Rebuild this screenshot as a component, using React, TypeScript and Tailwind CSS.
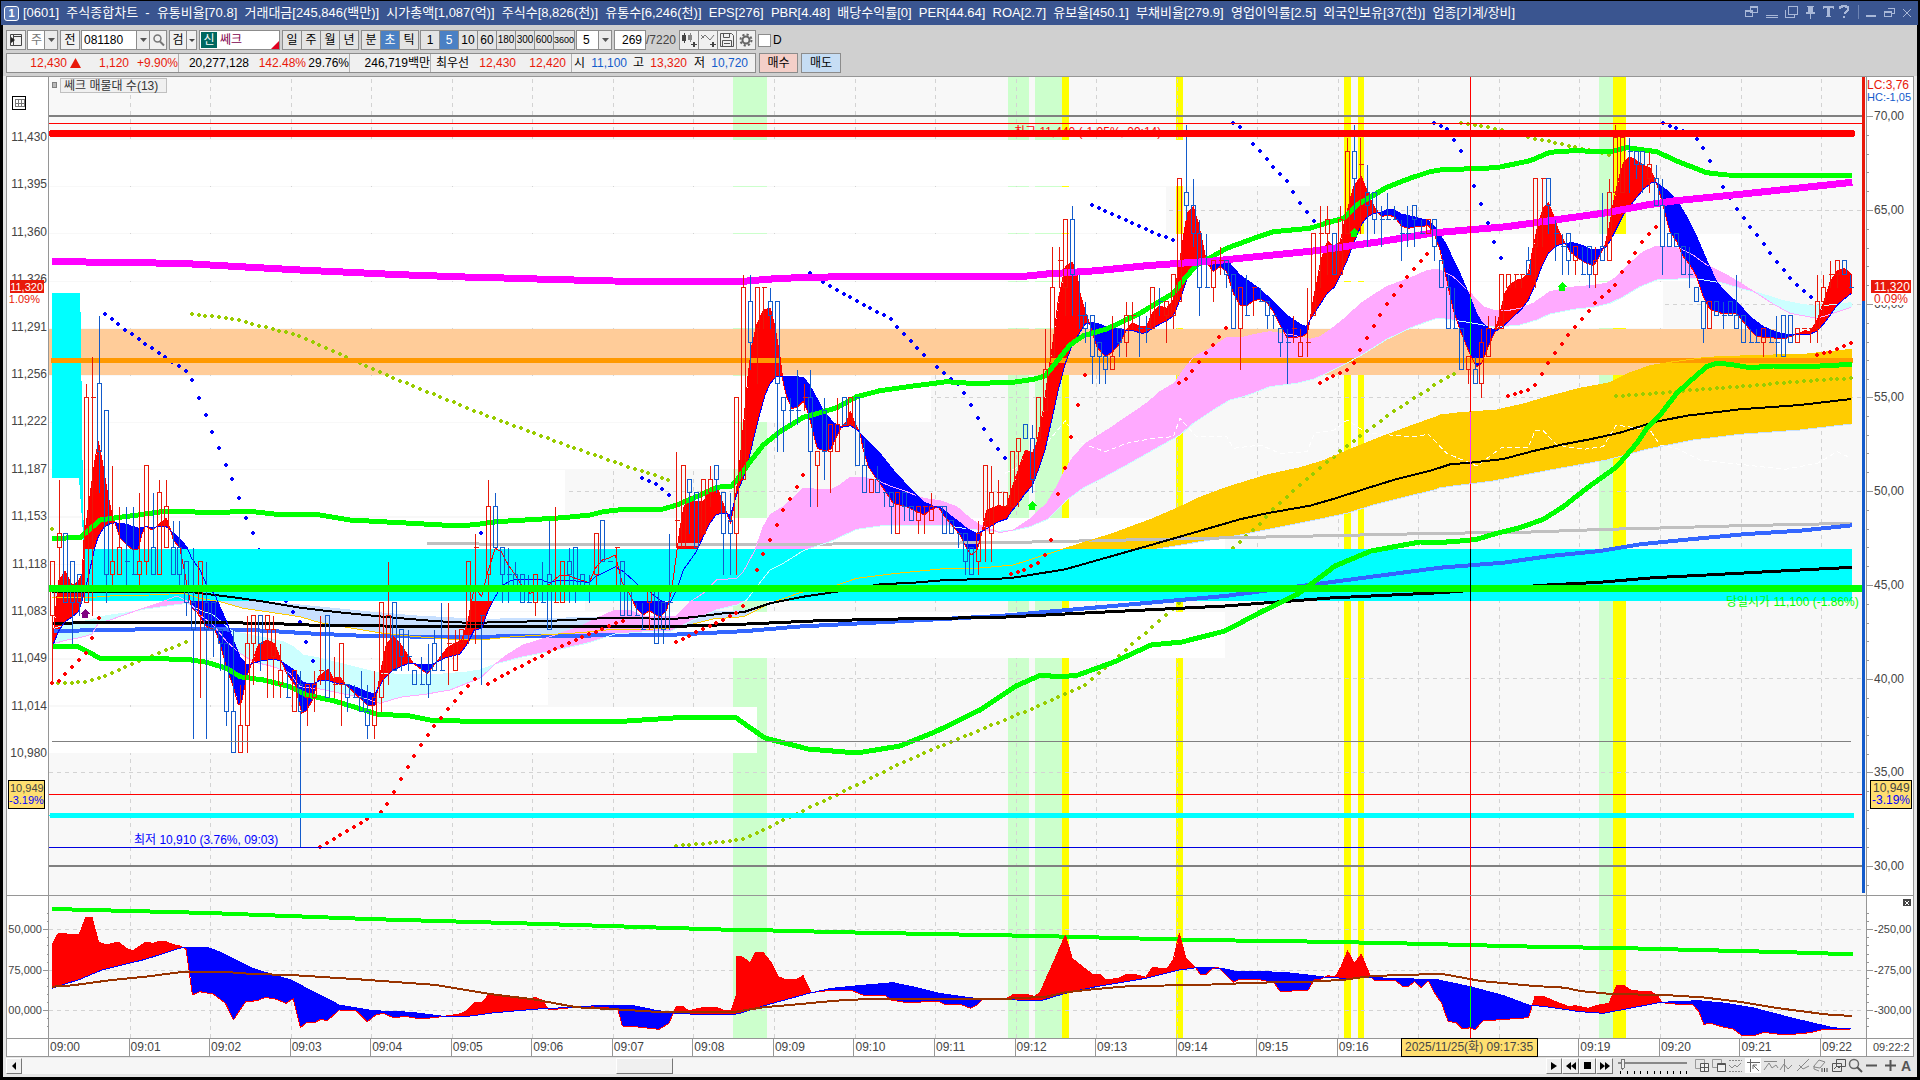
import type { ReactNode } from "react";

type Pt = [number, number];

const GRID_X = Array.from({ length: 23 }, (_, i) => Math.round(49 + 80.55 * i) + 0.5);

// Traces are stored as "x,y" pairs relative to a tile origin, three units per pixel.
const tile = (ox: number, oy: number, data: string, sx = 3): Pt[] =>
  data.split(" ").map((p) => {
    const [x, y] = p.split(",").map(Number);
    return [ox + x / sx, oy + y / 3];
  });

const A = (d: string) => tile(0, 130, d);
const B = (d: string) => tile(0, 540, d);
const C = (d: string) => tile(480, 240, d);
const D = (d: string) => tile(980, 100, d);
const E = (d: string) => tile(1440, 100, d);
const F = (d: string) => tile(1440, 500, d);
const V = (d: string) => tile(0, 880, d, 2.063);
const W = (d: string) => tile(740, 880, d, 2.613);
const X = (d: string) => tile(1320, 880, d, 2.613);
const abs = (d: string) => d.split(" ").map((p) => p.split(",").map(Number) as Pt);

const toPoints = (pts: Pt[]) => pts.map(([x, y]) => `${x.toFixed(1)},${y.toFixed(1)}`).join(" ");

function valueAt(pts: Pt[], x: number) {
  if (x <= pts[0][0]) return pts[0][1];
  for (let i = 1; i < pts.length; i++) {
    if (x <= pts[i][0]) {
      const [x0, y0] = pts[i - 1];
      const [x1, y1] = pts[i];
      return x1 === x0 ? y1 : y0 + ((y1 - y0) * (x - x0)) / (x1 - x0);
    }
  }
  return pts[pts.length - 1][1];
}

// One vertical sliver per pixel, split by which line is on top.
function slivers(a: Pt[], b: Pt[]) {
  let above = "";
  let below = "";
  const end = Math.min(a[a.length - 1][0], b[b.length - 1][0]);
  for (let x = Math.ceil(a[0][0]); x < end; x++) {
    const ya = Math.round(valueAt(a, x));
    const yb = Math.round(valueAt(b, x));
    if (ya < yb) above += `M${x} ${ya}h1V${yb}h-1z`;
    else if (yb < ya) below += `M${x} ${yb}h1V${ya}h-1z`;
  }
  return { above, below };
}

function dotsAlong(pts: Pt[]): Pt[] {
  const out: Pt[] = [];
  const n = Math.round((pts[pts.length - 1][0] - pts[0][0]) / 6.71);
  for (let i = 0; i <= n; i++) {
    const x = pts[0][0] + i * 6.71;
    out.push([Math.round(x), Math.round(valueAt(pts, x))]);
  }
  return out;
}

const fast: Pt[] = [
  ...A("157,1550"),
  ...B("175,125 195,93 215,135 235,125 247,100"),
  ...A("252,1230 260,1170 275,1060 285,990 295,935 305,985 320,1075 335,1150 345,1180 360,1225 375,1240 395,1257 415,1257 425,1215 436,1188 457,1200 478,1182 499,1165 510,1195 520,1230"),
  ...B("540,25 560,130 575,205 590,215 620,260 645,270 660,310 680,385 700,440 715,495 725,485 740,410 760,355 775,315 800,300 825,312 840,355 860,400 885,435 905,520 920,512 940,475 955,410 985,388 1000,415 1020,412 1040,438 1060,455 1080,475 1100,495 1125,495 1140,405 1160,310 1180,290 1200,310 1240,370 1282,402 1310,365 1345,320 1385,300 1405,240 1423,140"),
  ...C("5,1070 25,990 46,925 64,935 85,975 106,1005 124,1035 150,1060 200,1040 240,1005 265,1007 286,1015 328,1028 346,985 367,960 385,955 406,945 427,1030 448,1060 469,1105 490,1125 508,1112 540,1132 560,1110 575,1050 592,925 600,865 612,800 630,770 645,785 670,785 690,750 709,735 725,780 740,820 752,850 765,780 775,710 790,560 805,400 815,320 830,255 850,210 871,205 885,260 900,350 910,430 920,470 935,505 950,503 970,483 985,520 1000,580 1012,625 1035,633 1052,628 1070,590 1085,560 1100,545 1111,515 1125,550 1140,580 1150,630 1165,680 1185,710 1210,745 1240,790 1280,800 1310,815 1333,825 1350,810 1375,800 1390,825 1420,860 1440,885 1460,925 1474,945 1492,930 1505,880"),
  ...D("20,1230 55,1217 80,1220 94,1170 115,1110 136,1050 157,1060 170,1030 190,930 205,820 220,720 235,600 256,500 277,487 290,520 300,580 316,635 335,690 350,740 376,770 397,757 420,730 440,690 457,668 478,678 499,680 517,640 538,617 560,625 580,600 590,540 600,480 612,400 622,340 640,320 655,370 670,440 679,485 700,515 720,500 740,515 760,580 780,615 800,618 820,603 841,597 860,607 880,635 900,675 920,712 945,712 965,710 982,700 990,660 1000,600 1010,550 1021,490 1035,440 1045,425 1063,440 1081,425 1095,360 1110,300 1123,255 1144,230 1162,275 1183,320 1204,350 1222,345 1243,350 1264,378 1285,385 1310,380 1345,377 1362,400 1380,450"),
  ...E("20,540 40,630 60,690 92,768 110,800 124,792 145,740 165,695 180,640 195,580 210,555 230,540 250,535 265,520 280,440 295,370 310,325 325,308 340,345 355,390 375,430 390,455 410,472 430,485 460,498 478,470 495,435 508,380 520,310 535,240 550,190 568,170 590,182 610,195 630,205 649,247 665,300 680,360 690,395 710,425 730,470 750,495 770,530 790,590 810,628 850,642 889,640 910,665 930,690 950,710 990,713 1035,717 1050,710 1075,700 1095,692 1111,695 1132,660 1153,600 1171,545 1192,512 1213,505 1234,523"),
];

const slow: Pt[] = [
  ...B("157,320 175,275 195,245 215,232 235,215 247,180 265,110 285,20"),
  ...A("295,1220 310,1195 325,1183 345,1178 380,1183 400,1190 418,1195 436,1190 457,1192 478,1190 499,1190 515,1205 535,1222 560,1250"),
  ...B("575,55 600,90 620,135 645,165 660,200 680,245 700,300 720,350 740,375 760,370 785,362 820,358 840,362 860,375 885,392 905,425 920,430 945,430 960,420 985,422 1010,430 1040,433 1070,443 1100,455 1125,462 1150,420 1180,390 1220,372 1240,370 1262,375 1300,372 1340,352 1380,342 1400,315 1423,270"),
  ...C("5,1165 25,1110 46,1070 64,1040 85,1025 106,1018 150,1018 180,1018 205,1028 240,1020 265,1020 328,1028 346,1010 367,1000 406,980 427,992 448,1010 469,1030 490,1048 508,1055 547,1085 570,1088 590,1050 610,990 649,935 670,890 690,850 709,823 740,820 752,825 765,780 775,750 790,715 805,665 820,600 840,520 855,465 871,430 890,408 910,408 970,412 985,430 1000,455 1030,510 1060,548 1085,562 1111,557 1135,572 1150,590 1200,640 1240,690 1290,745 1330,785 1360,798 1385,805 1410,825 1440,848 1460,865 1490,880 1510,872"),
  ...D("34,1278 55,1265 80,1257 94,1235 115,1210 136,1180 157,1157 175,1110 195,1050 215,960 235,870 256,790 277,735 298,700 316,672 337,668 358,672 376,680 400,683 440,692 460,692 485,700 500,698 520,683 560,662 580,648 600,600 620,540 640,500 660,490 679,487 700,485 730,475 745,485 780,525 841,568 880,605 920,645 960,672 978,680 1000,645 1021,612 1042,580 1063,562 1081,527 1102,480 1123,425 1144,375 1162,350 1183,340 1200,338 1225,327 1243,330 1264,342 1300,350 1345,362 1370,385"),
  ...E("0,405 20,435 40,480 60,520 92,595 110,640 124,665 145,683 170,692 190,678 210,660 247,625 265,600 285,555 305,500 325,460 350,437 375,430 400,428 430,437 455,450 480,448 500,440 520,405 550,345 580,305 610,268 635,248 649,247 680,270 710,300 740,350 770,410 800,480 830,545 860,580 900,615 930,650 970,680 1010,697 1050,705 1110,703 1132,692 1153,670 1171,645 1192,615 1213,597 1234,580"),
];

const pinkSpan: Pt[] = [
  ...B("157,312 200,300 240,293 275,283 295,250 330,240 380,222 430,205 480,188 530,168 570,187 600,225 640,255 680,305 720,340 760,365 820,380 870,400 900,440 960,447 1020,460 1080,470 1140,490 1200,472 1280,462 1350,450 1400,430"),
  ...C("0,1315 46,1272 80,1245 130,1215 200,1193 300,1160 350,1135 406,1110 450,1112 500,1130 590,1128 630,1085 670,1060 709,1020 770,1015 790,995 825,930 850,860 870,825 910,800 970,745 1050,750 1080,735 1111,712 1150,712 1190,720 1230,738 1280,755 1330,775 1380,782 1430,800 1470,835 1500,855 1560,878"),
  ...D("100,1290 150,1257 200,1210 230,1160 255,1110 280,1070 320,1028 390,985 440,950 500,910 540,875 585,848 610,810 640,772 700,740 740,712 780,714 830,702 870,695 940,705 990,718 1020,710 1050,690 1100,650 1140,612 1180,585 1220,560 1260,545 1300,530 1340,512 1370,507"),
  ...E("0,510 40,530 92,580 130,620 165,632 200,632 240,625 280,610 330,575 390,562 450,557 500,550 530,530 570,490 610,455 650,438 720,445 760,465 800,495 860,525 900,548 950,580 1000,612 1050,640 1132,655 1180,640 1234,622"),
];

const cyanSpan: Pt[] = [
  ...B("157,265 270,240 300,230 380,218 430,208 560,190 600,210 640,225 700,275 780,290 850,305 880,320 910,345 960,355 1000,365 1040,375 1100,390 1140,400 1200,403 1270,405 1330,402 1400,396"),
  ...C("0,1290 46,1272 130,1250 220,1232 320,1210 406,1182 500,1175 570,1175 590,1165 640,1140 709,1110 770,1095 800,1080 830,1040 870,990 910,970 970,932 1050,905 1130,868 1200,858 1280,857 1400,857 1470,868 1530,874"),
  ...D("100,1292 150,1280 205,1257 260,1200 316,1160 376,1130 440,1095 520,1050 600,1005 640,970 700,930 750,900 800,887 870,860 950,850 1000,838 1050,815 1100,790 1150,762 1220,718 1300,680 1370,655"),
  ...E("0,655 92,668 165,682 240,675 290,660 330,642 400,628 460,622 510,610 550,590 600,560 650,540 760,535 850,550 910,568 960,580 1030,602 1090,614 1140,618 1234,608"),
];

const goldSpan: Pt[] = [
  ...B("157,172 250,174 330,168 450,165 550,160 600,175 660,185 730,205 800,215 900,230 960,248 1040,262 1150,280 1250,290 1340,297 1420,298"),
  ...C("0,1200 100,1190 300,1178 400,1168 520,1167 600,1162 700,1137 790,1130 870,1090 960,1058 1070,1035 1130,1015 1250,1000 1400,985"),
  ...D("0,1404 100,1395 256,1345 400,1300 515,1257 590,1225 660,1192 740,1162 860,1125 960,1103 1030,1082 1100,1052 1200,1012 1300,975 1370,950"),
  ...E("0,945 60,938 170,930 250,912 330,888 420,865 510,848 560,822 630,797 700,785 800,772 900,768 1100,762 1234,748"),
];

const skySpan: Pt[] = [
  ...B("157,160 500,160 700,183 780,185 850,190 950,200 1100,215 1250,228 1420,237"),
  ...C("0,1138 200,1135 400,1132 580,1135 700,1115 790,1112 900,1080 980,1070 1100,1060 1200,1037 1350,1033"),
  ...D("0,1450 256,1420 513,1350 780,1305 1020,1257 1100,1240 1180,1215 1260,1195 1370,1168"),
  ...E("0,1163 160,1143 330,1110 500,1080 620,1048 760,1020 900,1003 1080,990 1234,972"),
];

const magenta: Pt[] = [
  ...A("157,394 300,397 540,400 720,410 900,420 1200,434 1420,442"),
  ...C("0,112 200,118 400,123 600,125 790,124 900,115 1080,110 1480,110"),
  ...D("0,530 120,530 200,522 350,512 500,497 600,490 700,483 1000,453 1200,425 1370,397"),
  ...E("0,397 200,380 500,338 620,315 700,303 900,283 1237,247"),
];

const bandUpper: Pt[] = [
  ...A("157,1225 240,1223 270,1198 300,1170 350,1163 430,1153 500,1143 570,1145 640,1149 740,1143 830,1153 960,1155 1050,1170 1200,1178 1380,1188"),
  ...C("0,852 50,845 250,833 330,825 370,815 440,807 550,807 590,795 650,770 710,742 755,738 775,715 810,665 850,615 900,575 970,532 1020,518 1070,503 1130,470 1200,452 1300,438 1400,425 1470,430"),
  ...D("0,850 100,847 160,838 195,828 230,785 270,735 310,707 380,687 480,640 580,580 610,540 650,495 700,468 740,445 830,412 880,395 990,385 1030,372 1090,355 1130,315 1170,292 1220,262 1290,235 1350,215"),
  ...E("0,210 170,203 270,182 330,157 400,152 510,155 560,143 650,155 710,183 800,218 860,225 1000,226 1237,228"),
];

const bandLower: Pt[] = [
  ...B("157,320 235,320 260,333 300,355 450,356 560,358 620,367 680,385 720,410 790,420 870,440 920,465 1000,482 1060,500 1130,522 1230,528 1290,540 1440,545"),
  ...abs("612,722 673,718 735,717 749,727 765,738 808,749 857,753 900,746 937,731 980,710 1016,686 1041,675 1060,677 1078,675 1114,662 1151,645 1182,642 1225,631 1261,612 1298,594 1335,566 1371,551 1420,542"),
  ...F("0,127 40,125 110,118 170,100 240,83"),
  ...E("310,1258 370,1220 440,1165 530,1100 590,1030 620,985 660,945 710,880 760,835 800,800 830,790 870,793 930,803 1000,798 1100,800 1237,793"),
];

const blackThin: Pt[] = [
  ...B("157,155 300,157 580,157 700,172 780,183 900,203 1000,215 1150,230 1300,243 1430,250"),
  ...C("0,1148 200,1143 400,1133 580,1137 650,1130 730,1120 790,1117 870,1090 970,1070 1070,1055 1200,1033 1300,1028 1400,1020 1560,1016"),
  ...D("108,1432 256,1408 513,1335 780,1258 860,1240 990,1217 1060,1197 1160,1165 1250,1137 1340,1115"),
  ...E("0,1103 30,1093 92,1088 190,1077 280,1053 370,1033 450,1018 540,998 640,967 740,947 900,928 1080,915 1234,897"),
];

const blackThick: Pt[] = [
  ...B("157,250 370,247 650,248 800,250 950,256 1150,258 1430,261"),
  ...C("0,1160 400,1160 560,1160 650,1157 800,1152 1000,1143 1200,1138 1560,1132"),
  ...abs("1225,606 1330,598"),
  ...F("0,278 320,255 480,247 640,233 800,225 1040,212 1237,202"),
];

const royal: Pt[] = [
  ...B("157,273 440,268 600,266 800,272 920,280 1100,288 1430,292"),
  ...C("0,1190 250,1187 560,1185 700,1178 800,1173 950,1160 1200,1147 1560,1128"),
  ...abs("1225,596 1347,580"),
  ...F("0,203 190,188 330,168 480,153 600,133 760,117 920,102 1080,92 1237,76"),
];

const silver: Pt[] = [
  ...A("1282,1240 1430,1240"),
  ...C("0,913 500,914 800,915 1060,912 1560,908"),
  ...F("0,100 250,97 500,88 660,84 900,77 1237,70"),
];

const whiteDash: Pt[] = [
  ...D("75,1120 136,1090 157,1110 200,1030 256,962 300,1028 376,1055 440,1030 517,1015 580,1010 600,955 650,1010 740,1010 760,1045 841,1035 900,1060 982,1055 1003,1000 1063,990 1102,960 1162,1000 1300,1010 1345,1003"),
  ...E("20,1060 92,1090 110,1098 186,1042 265,1042 286,990 310,992 350,1035 430,1048 490,1040 528,975 630,990 660,1035 710,1045 780,1080 1035,1108 1132,1090 1192,1055 1234,1075"),
];

const sarBlue = [
  [...A("315,552 377,600 436,642 500,685 558,723 576,747 597,806 640,912 679,1008 700,1053 738,1164 760,1215"), ...B("780,35 799,75 819,117 841,155 860,187 880,218 900,248 921,312 940,366")],
  C("487,713 508,723 528,732 547,748 567,765"),
  C("4,878 5,878"),
  [...C("990,98 1030,127 1090,161 1170,204 1233,237 1252,262 1312,324 1332,345 1373,381 1435,435 1453,459 1494,534"), ...D("16,990 34,1020 75,1077")],
  D("336,315 397,343 478,378 538,405 580,420"),
  D("759,69 780,81 820,132 880,200 922,246 961,309 1003,366"),
  [...D("1362,69 1384,78 1405,90 1426,126"), ...E("64,156 104,261 124,315 145,373 165,432 186,480")],
  E("669,69 709,84 730,92 769,117 790,144 811,186 850,261 870,295 888,324 910,354 951,405 990,459 1030,510 1071,555 1111,591"),
].flatMap(dotsAlong);

const sarRed = [
  B("156,429 175,423 195,402 216,381 235,360 256,340 276,297 295,234"),
  B("961,921 1000,897 1041,873 1102,836 1141,816 1161,795 1203,717 1242,648 1282,585 1303,558 1345,506 1363,483 1384,459 1423,417"),
  C("25,1332 45,1320 106,1288 166,1257 205,1237 247,1218 300,1195 346,1175 388,1158 427,1142"),
  C("588,1206 610,1197 650,1176 709,1149 751,1128 770,1120 790,1098 828,993 849,945 871,897 909,813 930,777 970,705"),
  [...abs("1011,574 1026,569 1038,563 1050,548"), ...D("235,1176 256,1095 276,1002 297,903 316,819")],
  D("597,849 618,837 640,810 679,756 720,708 739,684"),
  D("1020,849 1041,837 1081,819 1102,810 1122,788 1143,747 1182,675 1222,612 1264,555 1303,504 1345,459"),
  E("204,888 265,870 285,855 306,819 345,759 388,702 427,654 466,609 508,570 528,552 546,516 588,456 607,426 649,378"),
  E("1131,765 1171,755 1192,747 1213,738 1234,729"),
].flatMap(dotsAlong);

const sarOlive = [
  A("156,1197 157,1197"),
  [...A("576,552 700,567 780,588 900,618 1000,665 1060,690 1160,735 1280,785 1430,845"), ...C("0,519 200,594 385,660 567,720")],
  B("175,429 256,426 316,408 397,372 457,348 559,306"),
  [...abs("676,846 741,840 784,820 857,785 912,758 980,730 1041,705 1084,686 1127,649 1176,606 1200,582 1225,555 1261,523"), ...D("880,1227 961,1155 1041,1085 1102,1038 1161,993 1243,933 1345,867"), ...E("0,843 46,819")],
  E("64,69 124,78 186,90 265,112 345,128 406,141 508,165"),
  E("528,888 650,880 780,868 930,857 1050,847 1234,834"),
].flatMap(dotsAlong);

// dir(u/d) bodyTop-bodyBottom high-low, in 10-won ticks below 11,440
const CANDLES =
  "u32-36 32-41,u30-31 26-34,d30-35 30-35,d32-35 32-38,d33-35 33-36,u20-35 19-35,u20-20 17-36,d19-24 14-27,d21-33 21-35,u32-33 25-34,u31-33 28-33,d32-32 28-34,d33-33 28-33,u32-33 27-34,u25-32 25-33,d31-33 27-33,u27-33 26-33,u28-31 26-31,d31-33 29-33,d31-33 29-34," +
  "d32-35 32-36,d35-37 31-45,u32-36 32-42,d35-37 32-45,d35-37 35-39,d37-38 37-40,d38-43 38-44,d43-46 37-46,u44-46 41-46,u38-44 36-46,u36-38 36-41,d36-38 36-40,u36-37 36-42,u37-39 36-42,u40-41 38-42,d42-42 40-42,u40-43 40-43,d41-43 40-53,u41-42 41-44,u41-42 40-43," +
  "u40-40 36-41,d36-42 36-42,u41-41 39-42,u38-41 38-44,d41-42 41-43,d42-42 41-42,d42-43 40-43,d43-44 41-45,u42-44 40-45,u35-42 35-43,u36-40 32-41,d35-40 35-40,d37-39 37-40,d39-39 37-40,d40-41 40-41,d41-41 39-41,d40-41 38-42,d38-40 37-40,d40-40 35-40,u38-38 35-41," +
  "u38-40 37-40,u37-38 37-38,u32-37 32-38,u31-31 30-38,d36-36 36-41,u28-33 26-35,d28-31 27-31,d31-33 31-35,d33-33 31-35,d33-34 32-34,d33-35 33-35,d35-35 33-35,u33-35 33-36,d35-35 32-35,d33-37 29-37,u35-35 28-35,u32-35 32-35,d32-33 31-35,d31-34 31-35,d33-34 33-34," +
  "d34-34 33-35,u30-33 30-34,d29-32 29-32,d32-32 32-32,u31-31 31-34,d32-36 32-36,d34-36 34-36,d36-36 35-36,d37-37 35-37,u34-35 34-37,d34-38 34-38,d35-37 35-38,d35-35 30-37,u29-29 24-31,u25-31 25-31,d26-27 26-30,d27-31 27-31,u26-30 26-30,u26-27 25-28,d25-26 25-27," +
  "d27-30 27-33,d29-30 27-33,u20-30 20-33,u12-26 11-26,d13-16 11-18,u12-15 12-19,u12-12 12-15,d13-14 12-15,d13-19 13-24,d20-21 20-24,d21-21 20-22,d21-21 18-22,u20-20 19-21,d20-24 18-28,u24-25 24-28,d21-24 20-26,u22-24 22-27,u22-24 20-24,d20-22 20-22,u20-22 20-22," +
  "d20-25 20-25,d25-27 23-27,u26-27 26-27,d26-27 25-27,d27-27 27-28,d27-28 27-30,u27-30 27-30,d27-28 27-29,d28-29 28-29,u28-29 28-30,u28-28 28-30,u28-29 27-29,d28-28 28-28,d28-30 28-30,d29-30 29-30,d30-30 30-31,d30-32 30-33,d31-33 31-33,u30-32 29-33,u25-29 25-32," +
  "u27-30 25-32,u27-27 26-28,u27-28 27-28,u24-28 24-28,u23-24 23-28,d22-23 22-23,d23-26 22-27,u20-23 20-23,u18-21 15-21,u12-17 9-17,u10-10 9-12,u7-12 7-14,d7-11 6-14,d14-14 11-15,d14-15 13-16,d14-17 14-19,d16-17 16-19,d17-18 17-19,u17-18 14-18,d15-16 15-17," +
  "u14-16 13-17,u14-14 13-15,d15-15 14-17,d15-15 14-16,u12-15 12-15,d13-13 12-14,u13-14 13-16,u11-14 11-15,u4-13 4-13,d5-6 0-7,d6-8 4-9,d8-12 7-14,d12-12 8-12,u10-12 10-13,u10-10 9-11,d10-11 10-12,d11-15 11-15,u12-15 12-18,d14-14 11-14,u12-12 12-14," +
  "d13-13 12-13,d13-14 13-15,d14-14 14-15,d15-16 15-17,d16-16 15-19,u15-15 14-16,u16-17 15-17,u16-16 12-17,u8-14 8-14,u8-8 6-12,u7-8 6-11,d8-11 8-11,u7-11 6-11,u2-8 1-8,d2-4 0-7,u3-3 1-8,d5-6 3-9,d5-7 5-8,d7-7 6-9,d7-7 5-7," +
  "d7-7 6-7,d8-8 7-10,d8-8 6-9,d6-7 6-9,d8-8 7-8,u7-8 7-8,d7-9 7-10,d10-12 10-12,d12-15 11-15,d15-15 12-15,d15-18 15-18,u17-18 17-19,d18-19 17-19,u16-19 15-20,u15-17 14-17,u15-15 14-15,u11-15 11-15,u11-12 11-12,u11-11 11-12,u11-11 11-12," +
  "d10-11 9-11,u4-9 4-12,u4-4 4-9,d4-6 4-8,d8-8 7-10,d9-9 8-11,d8-10 8-11,u9-10 9-11,d11-11 9-11,d9-11 9-12,u10-11 9-12,d9-10 5-10,u5-10 4-10,u1-5 0-5,u1-5 1-5,d2-2 1-5,d2-3 2-4,d2-3 2-5,u3-4 2-5,d4-6 3-6," +
  "d6-9 4-11,d8-9 8-9,d8-9 8-9,d9-11 9-11,d11-11 9-12,d12-13 12-13,d13-15 13-16,u13-15 13-15,d13-14 13-14,d14-14 13-15,d13-14 13-14,d14-15 11-15,d14-16 14-16,d16-16 15-16,d16-16 15-16,u15-16 15-17,d16-16 15-16,d16-16 14-17,d14-17 14-17,d14-16 14-16," +
  "u15-16 15-16,u15-15 15-15,u15-15 15-16,u13-15 11-16,u12-13 11-14,u11-11 10-12,u10-11 10-12,d10-11 10-11,d12-12 11-12";

const tickY = (n: number) => Math.round(123.5 + 13.66 * n) + 0.5;

function candlePath(dir: string) {
  let d = "";
  CANDLES.split(",").forEach((c, i) => {
    if (c[0] !== dir) return;
    const [body, wick] = c.slice(1).split(" ");
    const [t, b] = body.split("-").map(Number).map(tickY);
    const [h, l] = wick.split("-").map(Number).map(tickY);
    const x = Math.round(52 + 6.71 * i) + 0.5;
    if (h < t) d += `M${x} ${h}V${t}`;
    if (l > b) d += `M${x} ${b}V${l}`;
    d += t === b ? `M${x - 2} ${t}h5` : `M${x - 2} ${t}h4V${b}h-4z`;
  });
  return d;
}

const flowFast: Pt[] = [
  ...V("107,195 120,160 163,165 177,112 190,112 203,185 218,195 245,186 260,205 274,212 300,187 315,190 330,183 345,186 357,194 370,197 384,208 397,345 412,335 440,342 465,370 482,420 495,390 507,365 530,362 548,352 570,358 590,370 605,356 620,443 632,428 650,427 662,418 675,422 700,390 735,393 758,425 775,405 790,400 810,412 840,410 870,417 910,410 945,403 960,395 980,367 995,367 1010,340 1025,345 1050,352 1085,360 1105,352 1120,362 1132,390 1165,385 1200,380 1250,382 1275,390 1284,438 1310,440 1360,448 1380,430 1395,380 1410,380 1420,392 1450,383 1480,383 1495,392 1508,392 1520,340"),
  ...W("-8,230 5,230 27,248 40,217 60,217 80,245 100,290 115,297 150,297 165,287 185,337 210,335 240,330 290,330 320,345 378,345 395,360 430,367 520,365 535,373 580,375 603,385 620,375 635,358 695,357 715,343 750,343 770,350 785,335 800,295 820,245 850,165 868,235 895,260 920,282 940,283 955,300 990,295 1010,283 1030,283 1060,292 1078,262 1115,267 1132,240 1148,160 1165,235 1190,262 1203,283 1218,283 1235,265 1250,263 1270,285 1290,307 1305,297 1350,297 1395,308 1412,335 1485,330 1500,300"),
  ...X("0,298 20,287 40,290 55,260 72,213 90,250 108,222 130,285 140,300 195,300 215,318 232,318 247,305 265,323 283,303 300,340 318,370 335,425 355,427 372,447 393,443 405,450 425,423 545,413 562,348 582,348 610,362 650,380 668,377 700,385 720,377 755,370 775,317 795,317 815,332 865,335 880,345 895,368 935,373 975,375 990,395 1003,433 1020,430 1050,440 1080,447 1100,465 1140,465 1160,457 1215,465 1280,458 1310,450 1387,447"),
];

const flowSlow: Pt[] = [
  ...V("107,325 165,298 210,270 300,238 370,205 385,202 430,203 460,220 520,265 600,300 700,375 770,392 850,397 920,410 960,410 1020,398 1110,387 1180,382 1250,375 1300,375 1350,390 1395,400 1450,404 1510,404"),
  ...W("0,400 60,378 180,340 240,325 300,318 400,308 450,320 520,340 600,353 640,358 720,360 790,361 850,340 930,320 1060,295 1148,270 1200,262 1260,265 1290,273 1420,277 1500,287"),
  ...X("0,290 60,295 130,293 200,295 310,300 393,320 480,347 545,375 590,380 680,395 740,400 800,387 890,367 990,362 1060,370 1130,383 1230,413 1340,443 1387,447"),
];

const flowGreen: Pt[] = [
  ...V("107,87 430,99 760,117 1100,131 1500,149"),
  ...W("0,149 320,158 780,168 1200,180"),
  ...X("0,185 250,191 560,200 810,205 1230,217 1392,223"),
];

const flowBrown: Pt[] = [
  ...V("107,320 150,316 230,300 300,290 380,275 460,275 520,282 600,285 740,298 900,315 1010,342 1100,358 1190,382 1270,388 1360,396 1510,397"),
  ...W("0,393 60,382 150,373 250,362 350,356 500,356 700,356 800,350 850,337 930,327 1020,318 1200,315 1350,308 1490,305"),
  ...X("0,303 60,300 120,290 200,285 320,282 420,303 560,318 640,323 680,333 760,342 900,345 1000,352 1100,366 1200,385 1320,403 1390,408"),
];

// [left, right, colour] of the highlighted sessions
const BANDS: [number, number, string][] = [
  [733, 767, "#ccffcc"],
  [1008, 1029, "#ccffcc"],
  [1035, 1062, "#ccffcc"],
  [1062, 1069, "#ffff00"],
  [1176, 1183, "#ffff00"],
  [1344, 1351, "#ffff00"],
  [1358, 1364, "#ffff00"],
  [1599, 1613, "#ccffcc"],
  [1613, 1626, "#ffff00"],
];

// Volume-at-price rows: [top, bottom, right]
const PROFILE: [number, number, number][] = [
  [140, 186, 1310],
  [187, 233, 1166],
  [234, 281, 1741],
  [282, 328, 1663],
  [376, 422, 931],
  [423, 469, 740],
  [470, 516, 565],
  [518, 564, 1225],
  [565, 611, 585],
  [612, 658, 1225],
  [660, 705, 548],
  [707, 753, 757],
];

const LEFT_LABELS = ["11,430", "11,395", "11,360", "11,326", "11,291", "11,256", "11,222", "11,187", "11,153", "11,118", "11,083", "11,049", "11,014", "10,980"];
const RIGHT_LABELS = ["70,00", "65,00", "60,00", "55,00", "50,00", "45,00", "40,00", "35,00", "30,00"];

const FONT = "font-['Liberation_Sans','Noto_Sans_CJK_KR',sans-serif]";

function Line({ pts, color, width, dash }: { pts: Pt[]; color: string; width: number; dash?: string }) {
  return <polyline points={toPoints(pts)} fill="none" stroke={color} strokeWidth={width} strokeDasharray={dash} strokeLinejoin="round" />;
}

function Ribbon({ a, b, above, below }: { a: Pt[]; b: Pt[]; above: string; below: string }) {
  const s = slivers(a, b);
  return (
    <>
      <path d={s.above} fill={above} />
      <path d={s.below} fill={below} />
    </>
  );
}

function Dots({ pts, color }: { pts: Pt[]; color: string }) {
  return <path d={pts.map(([x, y]) => `M${x - 1} ${y - 2}h2v1h1v2h-1v1h-2v-1h-1v-2h1z`).join("")} fill={color} />;
}

function Arrow({ x, y, color }: { x: number; y: number; color: string }) {
  return <path d={`M${x} ${y - 5}l5 5h-2v4h-6v-4h-2z`} fill={color} />;
}

function Grid({ top, bottom, rows }: { top: number; bottom: number; rows: number[] }) {
  return (
    <g stroke="#d3d3d3" fill="none">
      {BANDS.map(([l, r, c]) => (
        <rect key={l} x={l} y={top} width={r - l} height={bottom - top} fill={c} stroke="none" />
      ))}
      {GRID_X.slice(1).map((x) => (
        <line key={x} x1={x} x2={x} y1={top + 2} y2={bottom} strokeDasharray="4 4" />
      ))}
      {rows.map((y) => (
        <line key={y} x1={49} x2={1862} y1={y} y2={y} strokeDasharray="4 4" />
      ))}
    </g>
  );
}

function PriceChart() {
  return (
    <svg viewBox="49 77 1818 818" preserveAspectRatio="none" className="h-[818px] min-w-0 flex-1 bg-[#f8f8f8]" shapeRendering="crispEdges">
      <Grid top={77} bottom={895} rows={[210.5, 304.5, 397.5, 491.5, 585.5, 678.5, 772.5]} />
      {PROFILE.map(([t, b, r]) => (
        <rect key={t} x={49} y={t} width={r - 49} height={b - t} fill="#fff" />
      ))}
      <rect x={49} y={329} width={1727} height={46} fill="#ffcc99" />

      <Ribbon a={goldSpan} b={skySpan} above="#ffcc00" below="#c8e0ff" />
      <Line pts={skySpan} color="#c8e0ff" width={1} />
      <Ribbon a={pinkSpan} b={cyanSpan} above="#ffaaff" below="#ccffff" />
      <Line pts={whiteDash} color="#ffffff" width={1} dash="5 3" />
      <Dots pts={sarOlive} color="#99cc00" />
      <Dots pts={sarBlue} color="#0000ff" />

      <Ribbon a={fast} b={slow} above="#ff0000" below="#0000ff" />
      <polygon points="52,293 80,293 81,330 82,430 84,549 82,520 79,478 52,478" fill="#00ffff" />
      <rect x={84} y={549} width={1768} height={52} fill="#00ffff" />
      <line x1={51} x2={1853} y1={360.5} y2={360.5} stroke="#ff9900" strokeWidth={5} />

      <Line pts={silver} color="#c0c0c0" width={3} />
      <Line pts={royal} color="#3366ff" width={4} />
      <Line pts={cyanSpan} color="#ccffff" width={1} />
      <Line pts={pinkSpan} color="#ffaaff" width={1} />
      <Line pts={goldSpan} color="#ffcc00" width={1} />
      <Line pts={blackThick} color="#000" width={3} />
      <Line pts={blackThin} color="#000" width={2} />
      <Line pts={fast} color="#ff0000" width={1} />
      <Line pts={slow} color="#0000ff" width={1} />

      <Line pts={bandUpper} color="#00ff00" width={5} />
      <Line pts={bandLower} color="#00ff00" width={5} />
      <Line pts={magenta} color="#ff00ff" width={7} />
      <Dots pts={sarRed} color="#ff0000" />

      <path d={candlePath("u")} fill="none" stroke="#e8190a" />
      <path d={candlePath("d")} fill="none" stroke="#135bcb" />

      <line x1={49} x2={1862} y1={116} y2={116} stroke="#808080" strokeWidth={2} />
      <line x1={49} x2={1862} y1={123.5} y2={123.5} stroke="#ff0000" />
      <text x={1014} y={136} fontSize={12} fill="#ff0000">최고 11,440 (-1.05%, 09:14)</text>
      <line x1={52} x2={1852} y1={133.5} y2={133.5} stroke="#ff0000" strokeWidth={7} strokeLinecap="round" />
      <line x1={49} x2={1862} y1={588.5} y2={588.5} stroke="#00ff00" strokeWidth={7} />
      <line x1={52} x2={1851} y1={741.5} y2={741.5} stroke="#808080" />
      <line x1={49} x2={1862} y1={794.5} y2={794.5} stroke="#ff0000" />
      <line x1={52} x2={1852} y1={815.5} y2={815.5} stroke="#00ffff" strokeWidth={5} strokeLinecap="round" />
      <line x1={49} x2={1862} y1={847.5} y2={847.5} stroke="#0000e0" />
      <line x1={49} x2={1862} y1={866} y2={866} stroke="#808080" strokeWidth={2} />

      <Arrow x={85} y={614} color="#800080" />
      <Arrow x={1032} y={506} color="#00ff00" />
      <Arrow x={1354} y={233} color="#00ff00" />
      <Arrow x={1562} y={287} color="#00ff00" />

      <text x={134} y={844} fontSize={12} fill="#0000ff">최저 10,910 (3.76%, 09:03)</text>
      <text x={1726} y={606} fontSize={12} fill="#00ff00">당일시가 11,100 (-1.86%)</text>

      {/* crosshair inverts over the filled areas */}
      <path d="M1470.5 77V895" stroke="#ff0000" />
      <path d="M1470.5 297V355" stroke="#00ff00" />
      <path d="M1470.5 412V484" stroke="#ff33ff" />
      <path d="M1470.5 549V601" stroke="#000" />
      <rect x={1862} y={77} width={3} height={224} fill="#e8190a" />
      <rect x={1862} y={301} width={3} height={592} fill="#135bcb" />
      <line x1={1866.5} x2={1866.5} y1={77} y2={895} stroke="#969696" />

      <rect x={52.5} y={82.5} width={4} height={5} fill="#b8b8b8" stroke="#808080" />
      <rect x={60.5} y={78.5} width={106} height={14} fill="#f0f0f0" stroke="#c0c0c0" />
      <text x={64} y={90} fontSize={12} fill="#333">쎄크 매물대 수(13)</text>
    </svg>
  );
}

function FlowChart() {
  return (
    <svg viewBox="49 896 1818 142" preserveAspectRatio="none" className="h-[142px] min-w-0 flex-1 bg-[#f8f8f8]" shapeRendering="crispEdges">
      <Grid top={896} bottom={1038} rows={[929.5, 970.5, 1010.5]} />
      <Line pts={flowGreen} color="#00ff00" width={4} />
      <Ribbon a={flowFast} b={flowSlow} above="#ff0000" below="#0000ff" />
      <Line pts={flowFast} color="#ff0000" width={1} />
      <Line pts={flowSlow} color="#0000ff" width={1} />
      <Line pts={flowBrown} color="#993300" width={2} />
      <path d="M1470.5 896V1038" stroke="#ff0000" />
      <path d="M1470.5 987V1027" stroke="#00ff00" />
      <line x1={1866.5} x2={1866.5} y1={896} y2={1038} stroke="#969696" />
    </svg>
  );
}

function LeftAxis() {
  return (
    <svg viewBox="7 77 42 818" className="h-[818px] w-[42px] shrink-0 bg-white" shapeRendering="crispEdges">
      <g stroke="#000" fill="#fff">
        <rect x={12.5} y={96.5} width={13} height={13} />
        <path d="M15 99.5h9M15 103.5h9M15 106.5h9M15.500 99v8M18.500 99v8M21.500 99v8M24 99v8" stroke="#777" />
      </g>
      {LEFT_LABELS.map((t, i) => (
        <text key={t} x={47} y={141 + Math.round(47.4 * i)} fontSize={12} fill="#444" textAnchor="end">{t}</text>
      ))}
      <rect x={10} y={280} width={34} height={13} fill="#e8190a" />
      <text x={43} y={291} fontSize={11} fill="#fff" textAnchor="end">11,320</text>
      <text x={40} y={303} fontSize={11} fill="#e8190a" textAnchor="end">1.09%</text>
      <rect x={8.5} y={780.5} width={36} height={28} fill="#ffdf70" stroke="#000" />
      <text x={10} y={792} fontSize={11} fill="#444">10,949</text>
      <text x={9} y={804} fontSize={11} fill="#0000ff">-3.19%</text>
      <line x1={48.5} x2={48.5} y1={77} y2={895} stroke="#969696" />
    </svg>
  );
}

function RightAxis() {
  return (
    <svg viewBox="1867 77 46 818" className="h-[818px] w-[46px] shrink-0 bg-white" shapeRendering="crispEdges">
      {RIGHT_LABELS.map((t, i) => {
        const y = Math.round(116 + 93.75 * i);
        return (
          <g key={t}>
            <path d={`M1867 ${y + 0.5}h6M1867 ${y + 19.5}h2M1867 ${y + 38.5}h2M1867 ${y + 56.5}h2M1867 ${y + 75.5}h2`} stroke="#969696" />
            <text x={1874} y={y + 4} fontSize={12} fill="#444">{t}</text>
          </g>
        );
      })}
      <text x={1867} y={89} fontSize={12} fill="#e8190a">LC:3,76</text>
      <text x={1867} y={101} fontSize={11} fill="#135bcb">HC:-1,05</text>
      <rect x={1871} y={280} width={40} height={13} fill="#e8190a" />
      <text x={1874} y={291} fontSize={12} fill="#fff">11,320</text>
      <rect x={1873} y={294} width={38} height={11} fill="#fff" />
      <text x={1874} y={303} fontSize={12} fill="#e8190a">0.09%</text>
      <rect x={1870.5} y={780.5} width={41} height={28} fill="#ffdf70" stroke="#000" />
      <text x={1873} y={792} fontSize={12} fill="#444">10,949</text>
      <text x={1872} y={804} fontSize={12} fill="#0000ff">-3.19%</text>
    </svg>
  );
}

function FlowAxis({ side }: { side: "left" | "right" }) {
  const rows: [number, string, string][] = [
    [929, "50,000", "-250,00"],
    [970, "75,000", "-275,00"],
    [1010, "00,000", "-300,00"],
  ];
  if (side === "left")
    return (
      <svg viewBox="7 896 42 142" className="h-[142px] w-[42px] shrink-0 bg-white" shapeRendering="crispEdges">
        {rows.map(([y, l]) => (
          <g key={y}>
            <path d={`M43 ${y + 0.5}h6M47 ${y - 15.5}h2M47 ${y - 7.5}h2M47 ${y + 8.5}h2M47 ${y + 16.5}h2`} stroke="#969696" />
            <text x={42} y={y + 4} fontSize={11} fill="#444" textAnchor="end">{l}</text>
          </g>
        ))}
        <line x1={48.5} x2={48.5} y1={896} y2={1038} stroke="#969696" />
      </svg>
    );
  return (
    <svg viewBox="1867 896 46 142" className="h-[142px] w-[46px] shrink-0 bg-white" shapeRendering="crispEdges">
      {rows.map(([y, , r]) => (
        <g key={y}>
          <path d={`M1867 ${y + 0.5}h6M1867 ${y - 15.5}h2M1867 ${y - 7.5}h2M1867 ${y + 8.5}h2M1867 ${y + 16.5}h2`} stroke="#969696" />
          <text x={1874} y={y + 4} fontSize={11} fill="#444">{r}</text>
        </g>
      ))}
      <rect x={1903} y={899} width={8} height={7} fill="#444" />
      <path d="M1905 901l4 4M1909 901l-4 4" stroke="#fff" />
    </svg>
  );
}

function TitleBar() {
  return (
    <header className="flex h-[24px] items-center bg-[#3a5590] pr-[5px] pl-[3px] text-white">
      <span className="mr-[4px] flex size-[15px] items-center justify-center rounded-[3px] border border-white bg-[#5d7bb8] text-[11px] font-bold">1</span>
      <h1 className="flex-1 overflow-hidden text-[13px] leading-[20px] whitespace-pre">
        [0601]  주식종합차트  -  유통비율[70.8]  거래대금[245,846(백만)]  시가총액[1,087(억)]  주식수[8,826(천)]  유통수[6,246(천)]  EPS[276]  PBR[4.48]  배당수익률[0]  PER[44.64]  ROA[2.7]  유보율[450.1]  부채비율[279.9]  영업이익률[2.5]  외국인보유[37(천)]  업종[기계/장비]
      </h1>
      <svg width="170" height="18" viewBox="1745 4 170 18" fill="none" stroke="#a9b8d8" shapeRendering="crispEdges">
        <path d="M1752.5 6.500h7v6h-7zM1752 7.500h8M1747.500 10.500h7v6h-7zM1747 11.500h8" />
        <path d="M1768 15.500h12M1768 17.500h12" />
        <path d="M1790.500 6.500h9v8h-9zM1787.500 9.500v8h9v-3" />
        <path d="M1809 6h7v1h-1v5h2v2h-9v-2h2v-5h-1zM1812 14h1v5h-1z" fill="#a9b8d8" stroke="none" />
        <path d="M1825 6h11v3h-1v-1h-3v8h1v1h-5v-1h1v-8h-3v1h-1z" fill="#a9b8d8" stroke="none" />
        <path d="M1842 9v-2h2v-1h4v1h2v3l-3 3v1M1846 16v2" strokeWidth="2" />
        <path d="M1860.500 5v14" stroke="#6d84b3" />
        <path d="M1868 16h10" strokeWidth="2" />
        <path d="M1889.500 8.500h7v5h-3M1886.500 11.500h7v5h-7zM1886 12.500h7" />
        <path d="M1905 9l8 8M1913 9l-8 8" />
      </svg>
    </header>
  );
}

const cell = "flex h-[20px] items-center justify-center border border-[#8c8c8c] bg-[#f0f0f0] text-[12px] leading-none text-black";

function Segments({ items, active, label }: { items: string[]; active?: string; label: string }) {
  return (
    <div className="mr-[2px] flex" role="group" aria-label={label}>
      {items.map((t) => (
        <button
          key={t}
          className={`-mr-px flex h-[20px] items-center justify-center border border-[#8c8c8c] leading-none whitespace-nowrap ${
            t === active ? "bg-[#4a80c4] text-white" : "bg-[#e4e4e4] text-black"
          } ${t.length > 3 ? "w-[22px] text-[9px]" : t.length > 2 ? "w-[20px] text-[10px]" : "w-[20px] text-[12px]"}`}
        >
          {t}
        </button>
      ))}
    </div>
  );
}

function Caret() {
  return (
    <span className="pointer-events-none flex h-full w-[13px] shrink-0 items-center justify-center border-l border-[#8c8c8c] bg-[#ececec]">
      <svg width="7" height="4" viewBox="0 0 7 4">
        <path d="M0 0h7L3.500 4z" fill="#555" />
      </svg>
    </span>
  );
}

function Toolbar() {
  return (
    <div className="flex h-[20px] items-center">
      <button className={`${cell} mr-px w-[20px]`} aria-label="패널">
        <svg width="14" height="14" viewBox="0 0 14 14" fill="none" stroke="#444">
          <path d="M4.500 1.500h8v11h-8zM4.500 3.500h8M1.500 1.500h3v11h-3z" />
          <path d="M2 4l4 3-4 3z" fill="#222" stroke="none" />
        </svg>
      </button>
      <label className={`${cell} mr-[2px] w-[31px] bg-white`}>
        <select className="h-full min-w-0 flex-1 appearance-none pl-[3px] text-[12px] text-[#777]" aria-label="종목 구분">
          <option>주</option>
        </select>
        <Caret />
      </label>
      <button className={`${cell} mr-px w-[20px]`}>전</button>
      <label className={`${cell} w-[69px] bg-white`}>
        <input className="h-full min-w-0 flex-1 pl-[2px] text-[12px]" defaultValue="081180" aria-label="종목코드" />
        <Caret />
      </label>
      <button className={`${cell} mr-[2px] -ml-px w-[18px]`} aria-label="검색">
        <svg width="13" height="14" viewBox="0 0 13 14" fill="none" stroke="#777">
          <circle cx="5.500" cy="5.500" r="3.500" strokeWidth="1.500" />
          <path d="M8 8.500l4 4" strokeWidth="2" />
        </svg>
      </button>
      <button className={`${cell} w-[18px] bg-[#e6edf8]`}>검</button>
      <button className={`${cell} mr-[2px] -ml-px w-[11px]`} aria-label="검색 목록">
        <svg width="6" height="3" viewBox="0 0 6 3">
          <path d="M0 0h6L3 3z" fill="#444" />
        </svg>
      </button>
      <div className="relative mr-[2px] flex h-[20px] w-[81px] items-center border border-[#8c8c8c] bg-white pl-px text-[12px] leading-none text-[#80004d]">
        <span className="mr-[3px] flex h-[16px] w-[16px] items-center justify-center bg-[#006860] text-white">신</span>
        쎄크
        <svg className="absolute right-0 bottom-0" width="8" height="8" viewBox="0 0 8 8">
          <path d="M8 0v8H0z" fill="#e00020" />
        </svg>
      </div>
      <Segments label="주기" items={["일", "주", "월", "년"]} />
      <span className="w-px" />
      <Segments label="단위" items={["분", "초", "틱"]} active="초" />
      <Segments label="간격" items={["1", "5", "10", "60", "180", "300", "600", "3600"]} active="5" />
      <label className={`${cell} mr-[2px] w-[36px] bg-white`}>
        <select className="h-full min-w-0 flex-1 appearance-none pl-[6px] text-[12px]" aria-label="간격 값">
          <option>5</option>
        </select>
        <Caret />
      </label>
      <input className={`${cell} w-[32px] bg-white pr-[3px] text-right`} defaultValue="269" aria-label="표시 개수" />
      <span className="mr-[2px] w-[31px] text-[12px] text-[#444]">/7220</span>
      <button className={`${cell} -mr-px w-[20px]`} aria-label="차트 추가">
        <svg width="16" height="16" viewBox="0 0 16 16" fill="#444">
          <path d="M3 1v2H1v6h2v2h1V9h1V3H4V1zM10 12h2v-2h2v2h2v1h-2v2h-2v-2h-2z" />
          <path d="M9 1v2H7v5h2v2h1V8h1V3h-1V1z" fill="#888" />
        </svg>
      </button>
      <button className={`${cell} -mr-px w-[20px]`} aria-label="지표 추가">
        <svg width="16" height="16" viewBox="0 0 16 16" fill="none" stroke="#777">
          <path d="M1 7l4-4 5 5 4-5M1 3l3 3" />
          <path d="M10 12h2v-2h2v2h2v1h-2v2h-2v-2h-2z" fill="#444" stroke="none" />
        </svg>
      </button>
      <button className={`${cell} -mr-px w-[20px]`} aria-label="저장">
        <svg width="14" height="14" viewBox="0 0 14 14" fill="none" stroke="#555">
          <path d="M.500.500h11l2 2v11H.500zM3.500.500v4h6v-4M2.500 13.500v-6h9v6M4 10.500h6" />
        </svg>
      </button>
      <button className={`${cell} mr-[2px] w-[20px]`} aria-label="설정">
        <svg width="14" height="14" viewBox="0 0 14 14" fill="none" stroke="#666">
          <circle cx="7" cy="7" r="3.500" strokeWidth="2" />
          <circle cx="7" cy="7" r="5.500" strokeWidth="2" strokeDasharray="2.200 2.100" />
        </svg>
      </button>
      <label className="flex items-center gap-[2px] text-[12px]">
        <input type="checkbox" className="size-[13px] appearance-none border border-[#8c8c8c] bg-white" />D
      </label>
    </div>
  );
}

function Quote({ w, color = "text-black", children }: { w: string; color?: string; children: ReactNode }) {
  return <span className={`${w} ${color} shrink-0 text-right whitespace-nowrap`}>{children}</span>;
}

function QuoteBar() {
  const red = "text-[#e8190a]";
  const blue = "text-[#135bcb]";
  const sep = <span className="h-full w-px shrink-0 bg-[#b0b0b0]" />;
  return (
    <div className="flex h-[20px] items-center gap-[3px]">
      <div className="flex h-[20px] w-[750px] items-center border border-[#8c8c8c] bg-[#f0f0f0] text-[12px] leading-none">
        <Quote w="w-[60px]" color={red}>12,430</Quote>
        <svg className="ml-[3px] shrink-0" width="11" height="10" viewBox="0 0 11 10">
          <path d="M5.500 0L11 10H0z" fill="#e8190a" />
        </svg>
        <Quote w="w-[48px]" color={red}>1,120</Quote>
        <Quote w="w-[49px]" color={red}>+9.90%</Quote>
        {sep}
        <Quote w="w-[70px]">20,277,128</Quote>
        <Quote w="w-[57px]" color={red}>142.48%</Quote>
        <Quote w="w-[43px]">29.76%</Quote>
        {sep}
        <Quote w="w-[80px]">246,719백만</Quote>
        {sep}
        <Quote w="w-[38px]">최우선</Quote>
        <Quote w="w-[47px]" color={red}>12,430</Quote>
        <Quote w="w-[50px]" color={red}>12,420</Quote>
        <span className="w-[5px]" />
        {sep}
        <Quote w="w-[13px]">시</Quote>
        <Quote w="w-[42px]" color={blue}>11,100</Quote>
        <Quote w="w-[17px]">고</Quote>
        <Quote w="w-[43px]" color={red}>13,320</Quote>
        <Quote w="w-[18px]">저</Quote>
        <Quote w="w-[43px]" color={blue}>10,720</Quote>
      </div>
      <button className="h-[20px] w-[39px] border border-[#8c8c8c] bg-[#f4cfc8] text-[12px] leading-none">매수</button>
      <button className="h-[20px] w-[40px] border border-[#8c8c8c] bg-[#c6ddf4] text-[12px] leading-none">매도</button>
    </div>
  );
}

function TimeAxis() {
  return (
    <div className="flex h-[19px] border-y border-[#969696] bg-white text-[12px] leading-[16px] text-[#444]">
      <div className="w-[41px] shrink-0" />
      <div className="relative min-w-0 flex-1">
        <div className="grid h-full grid-cols-[repeat(22,minmax(0,8055fr))_minmax(0,4600fr)]">
          {GRID_X.map((x, i) => (
            <span key={x} className="border-l border-[#969696] pl-px">
              {i === 17 || i === 18 ? "" : `09:${String(i).padStart(2, "0")}`}
            </span>
          ))}
        </div>
        <div className="absolute -top-px left-[74.4%] h-[19px] w-[137px] border border-black bg-[#ffdf70] text-center whitespace-nowrap">
          2025/11/25(화) 09:17:35
        </div>
      </div>
      <div className="w-[47px] shrink-0 border-l border-[#969696] pl-[6px] text-[11px] whitespace-nowrap">09:22:2</div>
    </div>
  );
}

const raised = "flex h-[16px] items-center justify-center border border-t-white border-r-[#777] border-b-[#777] border-l-white bg-[#f0f0f0]";

function BottomBar() {
  return (
    <footer className="flex h-[17px] items-center">
      <button className={`${raised} w-[16px]`} aria-label="이전">
        <svg width="4" height="8" viewBox="0 0 4 8">
          <path d="M4 0v8L0 4z" />
        </svg>
      </button>
      <div className="flex h-[16px] min-w-0 flex-1 bg-[#f6f6f6]">
        <div className="w-[39%]" />
        <div className={`${raised} w-[57px]`} />
      </div>
      <button className={`${raised} w-[16px]`} aria-label="재생">
        <svg width="6" height="8" viewBox="0 0 6 8"><path d="M0 0v8l6-4z" /></svg>
      </button>
      <button className={`${raised} w-[17px]`} aria-label="뒤로">
        <svg width="10" height="8" viewBox="0 0 10 8"><path d="M5 0v8L0 4zM10 0v8L5 4z" /></svg>
      </button>
      <button className={`${raised} w-[17px]`} aria-label="정지">
        <svg width="7" height="7" viewBox="0 0 7 7"><path d="M0 0h7v7H0z" /></svg>
      </button>
      <button className={`${raised} w-[17px]`} aria-label="앞으로">
        <svg width="10" height="8" viewBox="0 0 10 8"><path d="M0 0v8l5-4zM5 0v8l5-4z" /></svg>
      </button>
      <svg className="ml-[5px]" width="72" height="17" viewBox="0 0 72 17" shapeRendering="crispEdges">
        <path d="M0 5.500h69" stroke="#888" strokeWidth="2" />
        <path d="M3.500 2.500h3v8l-2 2-1-2z" fill="#f0f0f0" stroke="#777" />
        <path d="M2.500 14v3M9.500 14v3M16.500 14v3M22.500 14v3M29.500 14v3M36.500 14v3M42.500 14v3M49.500 14v3M55.500 14v3M62.500 14v3M68.500 14v3" stroke="#000" />
      </svg>
      <svg className="ml-[4px]" width="220" height="17" viewBox="0 0 220 17" fill="none" stroke="#888">
        <path d="M1.500 2.500h9v9h-9z" stroke="#999" />
        <path d="M6.500 6.500h8v8h-8zM10.500 6v9M6 10.500h9" stroke="#555" fill="#f0f0f0" />
        <path d="M18.500 2.500h9v8h-9z" stroke="#999" />
        <path d="M23.500 6.500h8v8h-8zM23 7.500h9" stroke="#555" fill="#f0f0f0" />
        <path d="M35 3.500h13M35 14.500h13" strokeDasharray="2 1" />
        <path d="M35 8l3 3 3-3 2 2 4-4" />
        <rect x="51" y="1" width="16" height="15" fill="#fff" stroke="none" />
        <path d="M53 5.500h13M56.500 2v13M59 8l6 6M59 12V8h4" stroke="#666" />
        <path d="M70 4.500h13M70 13l5-7 3 5 4-3 2 3" />
        <path d="M90.500 2v13M86 13l4-6 4 5 4-4" />
        <path d="M104 13L115 2M105 8l4 4 6-3M103 14l3-3" />
        <path d="M120 9l5-6 6 2-5 6-6-1zM120 9v3l5 2" />
        <path d="M128 15v-4M130.500 15v-4M133 15v-4" stroke="#444" />
        <path d="M142.500 2.500h9v7h-9zM138.500 6.500h9v8h-9zM140 12l3-3 2 2 3-3" stroke="#555" />
        <circle cx="160" cy="7" r="4.500" stroke="#666" strokeWidth="1.500" />
        <path d="M163 10l5 5" stroke="#555" strokeWidth="2" />
        <path d="M172 8.500h11M191 8.500h11M196.500 3v11" stroke="#555" strokeWidth="2" />
        <text x="207" y="14" fontSize="14" fontWeight="700" fill="#555" stroke="none">A</text>
      </svg>
    </footer>
  );
}

export default function App() {
  return (
    <div className={`min-h-screen overflow-hidden bg-black pt-px pr-[2px] pl-px text-[12px] ${FONT}`}>
      <TitleBar />
      <main className="mr-px ml-[2px] bg-[#e6e6e6] pb-[3px]">
        <section className="flex h-[51px] flex-col gap-[3px] bg-[#d0d0d0] pt-[5px] pl-[3px]">
          <Toolbar />
          <QuoteBar />
        </section>
        <section className="mr-[3px] ml-[3px]">
          <div className="border-x border-t border-[#969696]">
            <div className="flex border-b border-[#969696]">
              <LeftAxis />
              <PriceChart />
              <RightAxis />
            </div>
            <div className="flex">
              <FlowAxis side="left" />
              <FlowChart />
              <FlowAxis side="right" />
            </div>
            <TimeAxis />
          </div>
          <BottomBar />
        </section>
      </main>
    </div>
  );
}
